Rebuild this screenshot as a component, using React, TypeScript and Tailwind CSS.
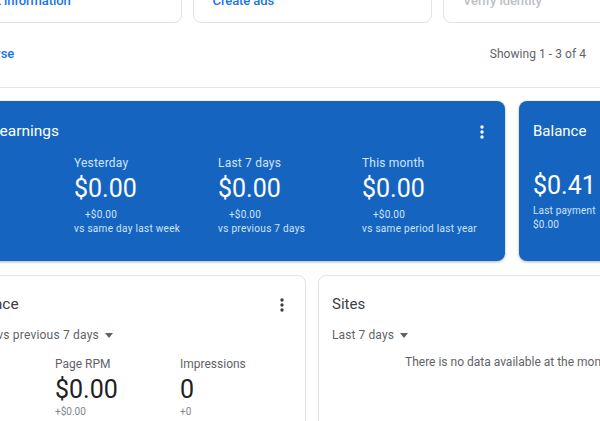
const stats = [
  { label: "Today so far", value: "$0.00", delta: "+$0.00", note: "vs yesterday" },
  { label: "Yesterday", value: "$0.00", delta: "+$0.00", note: "vs same day last week" },
  { label: "Last 7 days", value: "$0.00", delta: "+$0.00", note: "vs previous 7 days" },
  { label: "This month", value: "$0.00", delta: "+$0.00", note: "vs same period last year" },
]

const tasks = [
  { text: "Bank information", color: "text-[#1a73e8] pl-[10px]" },
  { text: "Create ads", color: "text-[#1a73e8]" },
  { text: "Verify identity", color: "text-[#bdc1c6]" },
]

function Dots({ className }: { className: string }) {
  return (
    <svg width="4" height="14" viewBox="0 0 4 14" className={className}>
      <circle cx="2" cy="2" r="1.7" fill="currentColor" />
      <circle cx="2" cy="7" r="1.7" fill="currentColor" />
      <circle cx="2" cy="12" r="1.7" fill="currentColor" />
    </svg>
  )
}

function Caret() {
  return (
    <svg width="8" height="5" viewBox="0 0 8 5" className="text-[#5f6368]">
      <path d="M0 0h8L4 5z" fill="currentColor" />
    </svg>
  )
}

function App() {
  return (
    <div className="h-[421px] w-[600px] overflow-hidden bg-white font-['Roboto',sans-serif]">
      <div className="ml-[-94px] w-[960px]">
        {/* Task cards, scrolled mostly out of view */}
        <div className="mt-[-38px] flex gap-[11px] pl-[36px]">
          {tasks.map((task) => (
            <div
              key={task.text}
              className="h-[61px] w-[239.5px] rounded-lg border border-[#e3e3e3] px-[19px] pt-[29px]"
            >
              <span className={`block text-[13px] font-medium leading-[18px] tracking-[-0.1px] ${task.color}`}>{task.text}</span>
            </div>
          ))}
        </div>

        <div className="flex h-[65px] w-[694px] items-center justify-between border-b border-[#e3e3e3] pb-[2px] pl-[65px]">
          <span className="text-[13px] font-medium text-[#1a73e8]">Browse</span>
          <span className="mr-[14px] text-[12px] tracking-[0.05px] text-[#5f6368]">Showing 1 - 3 of 4</span>
        </div>

        {/* Earnings and balance */}
        <div className="mt-[13px] flex gap-[14px]">
          <div className="relative h-[160px] w-[599px] rounded-lg bg-[#1565c0] px-[24px] pt-[20px] text-white shadow-[0_1px_3px_rgba(60,64,67,0.4)]">
            <div className="ml-[-4px] text-[15.5px] leading-[20px]">Estimated earnings</div>
            <Dots className="absolute right-[21px] top-[24px] text-white" />
            <div className="mt-[14px] flex">
              {stats.map((stat) => (
                <div key={stat.label} className="w-[144px] shrink-0">
                  <div className="text-[12px] leading-[16px] tracking-[0.2px] text-[#d2e3fc]">{stat.label}</div>
                  <div className="mt-[2px] text-[25px] leading-[32px]">{stat.value}</div>
                  <div className="mt-[3px] pl-[11px] text-[10px] leading-[14px] tracking-[0.2px] text-[#d2e3fc]">{stat.delta}</div>
                  <div className="text-[10px] leading-[14px] tracking-[0.3px] text-[#d2e3fc]">{stat.note}</div>
                </div>
              ))}
            </div>
          </div>
          <div className="h-[160px] w-[240px] rounded-lg bg-[#1565c0] px-[14px] pt-[20px] text-white shadow-[0_1px_3px_rgba(60,64,67,0.4)]">
            <div className="text-[15px] leading-[20px]">Balance</div>
            <div className="mt-[29px] text-[25px] leading-[32px]">$0.41</div>
            <div className="mt-[2px] text-[10px] leading-[14px] tracking-[0.2px] text-[#d2e3fc]">Last payment</div>
            <div className="text-[10px] leading-[14px] tracking-[0.2px] text-[#d2e3fc]">$0.00</div>
          </div>
        </div>

        {/* Performance and sites */}
        <div className="mt-[14px] flex gap-[12px]">
          <div className="relative h-[160px] w-[400px] rounded-lg border border-[#e3e3e3] pl-[24px] pt-[18px]">
            <div className="ml-[-2px] text-[15.5px] leading-[20px] text-[#3c4043]">Performance</div>
            <Dots className="absolute right-[21px] top-[22px] text-[#3c4043]" />
            <div className="mt-[13px] flex items-center gap-[6px] text-[12px] leading-[16px] tracking-[0.2px] text-[#5f6368]">
              <span>Last 7 days vs previous 7 days</span>
              <Caret />
            </div>
            <div className="mt-[13px] flex">
              <div className="w-[124px] shrink-0" />
              <div className="w-[125px] shrink-0">
                <div className="text-[12px] leading-[16px] text-[#5f6368]">Page RPM</div>
                <div className="mt-[2px] text-[25px] leading-[32px] text-[#202124]">$0.00</div>
                <div className="mt-[-1px] text-[10px] leading-[14px] text-[#80868b]">+$0.00</div>
              </div>
              <div>
                <div className="text-[12px] leading-[16px] text-[#5f6368]">Impressions</div>
                <div className="mt-[2px] text-[25px] leading-[32px] text-[#202124]">0</div>
                <div className="mt-[-1px] text-[10px] leading-[14px] text-[#80868b]">+0</div>
              </div>
            </div>
          </div>
          <div className="h-[160px] w-[400px] rounded-lg border border-[#e3e3e3] pl-[13px] pt-[18px]">
            <div className="text-[15px] leading-[20px] text-[#3c4043]">Sites</div>
            <div className="mt-[13px] flex items-center gap-[6px] text-[12px] leading-[16px] tracking-[0.1px] text-[#5f6368]">
              <span>Last 7 days</span>
              <Caret />
            </div>
            <div className="mt-[11px] whitespace-nowrap pl-[73px] text-[12px] leading-[16px] text-[#5f6368]">
              There is no data available at the moment
            </div>
          </div>
        </div>
      </div>
    </div>
  )
}

export default App
